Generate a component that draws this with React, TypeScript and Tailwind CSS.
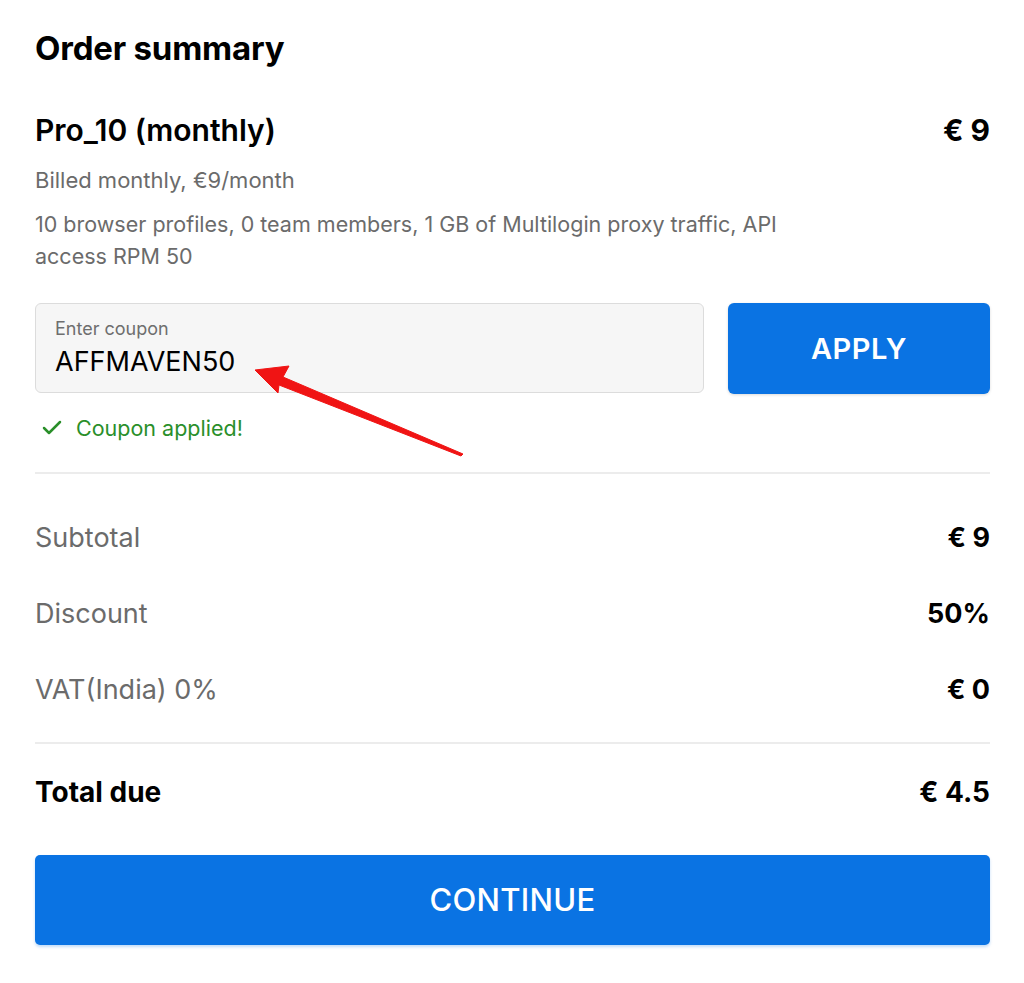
import { Check } from "lucide-react";

const rows = [
  { label: "Subtotal", value: "€ 9" },
  { label: "Discount", value: "50%" },
  { label: "VAT(India) 0%", value: "€ 0" },
];

// Red annotation arrow pointing at the coupon code
function PointerArrow() {
  return (
    <svg
      className="pointer-events-none absolute left-[250px] top-[360px]"
      width="220"
      height="100"
      viewBox="0 0 220 100"
    >
      <path
        d="M5 10 L39 6 L33 17 L213 94 L211 96 L29 25 L28 33 Z"
        fill="#f01414"
        stroke="#f01414"
        strokeWidth="1"
        strokeLinejoin="round"
      />
    </svg>
  );
}

export default function App() {
  return (
    <div className="relative min-h-[983px] w-[1024px] bg-white pl-[35px] pr-[34px] pt-[28px] font-['Inter',sans-serif] text-black">
      <h1 className="text-[33px] font-bold leading-[40px] tracking-[-0.2px]">Order summary</h1>

      <div className="mt-[44px] flex items-center justify-between">
        <h2 className="text-[30px] font-semibold leading-[36px]">Pro_10 (monthly)</h2>
        <span className="text-[30px] font-bold leading-[36px]">€ 9</span>
      </div>
      <p className="mt-[17px] text-[22px] leading-[30px] text-[#6b6b6b]">Billed monthly, €9/month</p>
      <p className="mt-[13px] max-w-[790px] text-[21.5px] leading-[32px] text-[#6b6b6b]">
        10 browser profiles, 0 team members, 1 GB of Multilogin proxy traffic, API access RPM 50
      </p>

      <div className="mt-[31px] flex gap-[24px]">
        <label className="flex h-[90px] flex-1 flex-col justify-center rounded-[6px] border border-[#dcdcdc] bg-[#f6f6f6] px-[19px]">
          <span className="text-[18px] leading-[24px] text-[#6e6e6e]">Enter coupon</span>
          <input
            className="mt-[4px] w-full bg-transparent text-[27px] leading-[34px] text-black outline-none"
            defaultValue="AFFMAVEN50"
          />
        </label>
        <button className="h-[91px] w-[262px] rounded-[6px] bg-[#0a73e3] text-[29px] font-semibold tracking-[0.5px] text-white shadow-[0_1px_3px_rgba(0,0,0,0.15)]">
          APPLY
        </button>
      </div>

      <div className="mt-[20px] flex items-center gap-[12px] pl-[5px] text-[21.5px] leading-[28px] text-[#2a8f2a]">
        <Check size={24} strokeWidth={2.5} />
        <span>Coupon applied!</span>
      </div>

      <div className="mt-[30px] h-[2px] bg-[#ececec]" />

      <div className="pt-[46px]">
        {rows.map((r) => (
          <div key={r.label} className="mb-[40px] flex items-center justify-between leading-[36px]">
            <span className="text-[27px] text-[#6b6b6b]">{r.label}</span>
            <span className="text-[27px] font-bold">{r.value}</span>
          </div>
        ))}
      </div>

      <div className="mt-[-6px] h-[2px] bg-[#ececec]" />

      <div className="mt-[30px] flex items-center justify-between leading-[36px]">
        <span className="text-[28px] font-bold">Total due</span>
        <span className="text-[28px] font-bold">€ 4.5</span>
      </div>

      <button className="mt-[45px] h-[90px] w-full rounded-[5px] bg-[#0a73e3] text-[31px] font-medium tracking-[0.3px] text-white shadow-[0_2px_3px_rgba(10,115,227,0.25)]">
        CONTINUE
      </button>

      <PointerArrow />
    </div>
  );
}
